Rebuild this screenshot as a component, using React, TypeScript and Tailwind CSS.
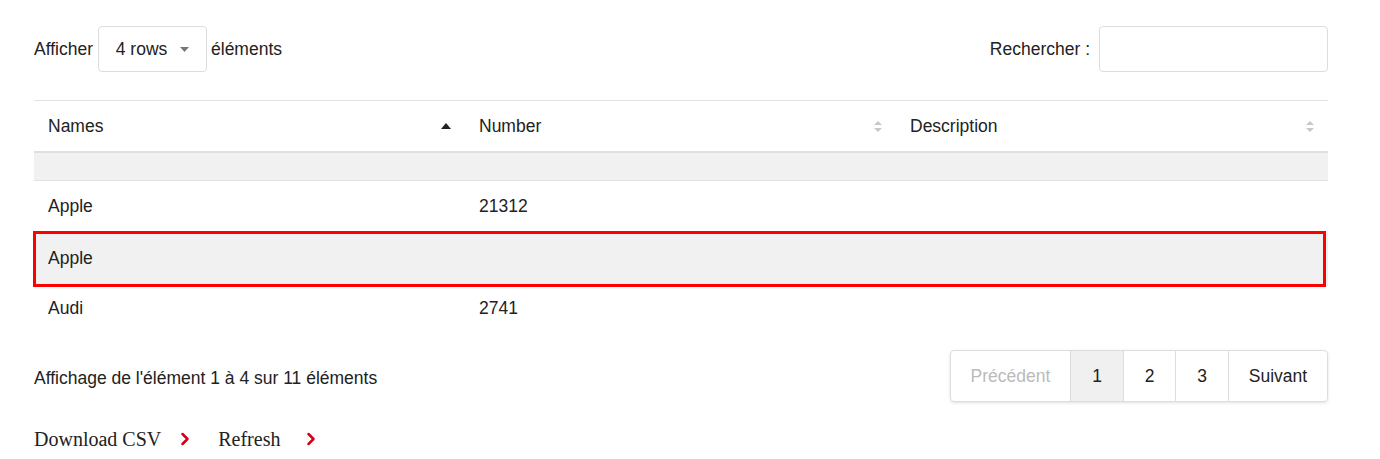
import { ChevronRight } from "lucide-react";

type Row = { name: string; number: string; description: string; highlighted?: boolean };

const rows: Row[] = [
  { name: "", number: "", description: "" },
  { name: "Apple", number: "21312", description: "" },
  { name: "Apple", number: "", description: "", highlighted: true },
  { name: "Audi", number: "2741", description: "" },
];

const SortAsc = () => (
  <svg width="10" height="6" viewBox="0 0 10 6" className="text-[#222]">
    <path d="M0 6 L5 0 L10 6 Z" fill="currentColor" />
  </svg>
);

const SortBoth = () => (
  <svg width="8" height="11" viewBox="0 0 8 11" className="text-[#c8c8c8]">
    <path d="M0 4 L4 0 L8 4 Z" fill="currentColor" />
    <path d="M0 7 L4 11 L8 7 Z" fill="currentColor" />
  </svg>
);

const HeaderCell = ({ label, sort }: { label: string; sort: "asc" | "none" }) => (
  <div className="flex items-center justify-between px-[14px]">
    <span>{label}</span>
    {sort === "asc" ? <SortAsc /> : <SortBoth />}
  </div>
);

export default function App() {
  return (
    <div
      className="w-[1380px] h-[459px] bg-white text-[17.5px] text-[#222]"
      style={{ fontFamily: '"Liberation Sans", Arial, sans-serif' }}
    >
      <div className="ml-[34px] w-[1294px] pt-[26px]">
        {/* top controls */}
        <div className="flex items-center justify-between h-[46px]">
          <div className="flex items-center">
            <span>Afficher</span>
            <div className="ml-[5px] flex h-[46px] w-[109px] items-center justify-center gap-[13px] rounded-[4px] border border-[#ddd] bg-white">
              <span>4 rows</span>
              <svg width="9" height="5" viewBox="0 0 9 5">
                <path d="M0 0 L9 0 L4.5 5 Z" fill="#777" />
              </svg>
            </div>
            <span className="ml-[4px]">éléments</span>
          </div>
          <div className="flex items-center">
            <span>Rechercher :</span>
            <div className="ml-[9px] h-[46px] w-[229px] rounded-[4px] border border-[#ddd] bg-white" />
          </div>
        </div>

        {/* table */}
        <div className="mt-[28px] border-t border-[#e3e3e3]">
          <div className="grid h-[52px] grid-cols-[431px_431px_432px] items-center border-b-2 border-[#dde0e3]">
            <HeaderCell label="Names" sort="asc" />
            <HeaderCell label="Number" sort="none" />
            <HeaderCell label="Description" sort="none" />
          </div>
          {rows.map((row, i) => {
            if (i === 0) {
              return <div key={i} className="h-[28px] border-b border-[#e3e3e3] bg-[#f1f1f1]" />;
            }
            if (row.highlighted) {
              return (
                <div key={i} className="bg-[#f1f1f1] pr-[2px]">
                  <div className="grid h-[56px] grid-cols-[431px_431px_429px] items-center border-[3px] border-[#ff0000] -ml-[1px] pb-[2px]">
                    <div className="pl-[12px]">{row.name}</div>
                    <div className="pl-[11px]">{row.number}</div>
                    <div className="pl-[11px]">{row.description}</div>
                  </div>
                </div>
              );
            }
            return (
              <div
                key={i}
                className={`grid grid-cols-[431px_431px_432px] items-center ${i === 3 ? "h-[43px]" : "h-[50px]"}`}
              >
                <div className="px-[14px]">{row.name}</div>
                <div className="px-[14px]">{row.number}</div>
                <div className="px-[14px]">{row.description}</div>
              </div>
            );
          })}
        </div>

        {/* footer */}
        <div className="mt-[20px] flex items-center justify-between">
          <div className="pt-[4px]">Affichage de l'élément 1 à 4 sur 11 éléments</div>
          <div className="flex h-[52px] overflow-hidden rounded-[4px] border border-[#ddd] shadow-[0_1px_3px_rgba(0,0,0,0.12)]">
            <div className="flex w-[119px] items-center justify-center text-[#bbb]">Précédent</div>
            <div className="flex w-[53px] items-center justify-center border-l border-[#ddd] bg-[#f0f0f0]">1</div>
            <div className="flex w-[52px] items-center justify-center border-l border-[#ddd]">2</div>
            <div className="flex w-[53px] items-center justify-center border-l border-[#ddd]">3</div>
            <div className="flex w-[99px] items-center justify-center border-l border-[#ddd]">Suivant</div>
          </div>
        </div>

        <div
          className="mt-[22px] flex items-center text-[20px] text-[#222]"
          style={{ fontFamily: '"Liberation Serif", "Times New Roman", serif' }}
        >
          <span>Download CSV</span>
          <ChevronRight className="ml-[14px] h-[20px] w-[20px] text-[#d0021b]" strokeWidth={3} />
          <span className="ml-[23px]">Refresh</span>
          <ChevronRight className="ml-[21px] h-[20px] w-[20px] text-[#d0021b]" strokeWidth={3} />
        </div>
      </div>
    </div>
  );
}
